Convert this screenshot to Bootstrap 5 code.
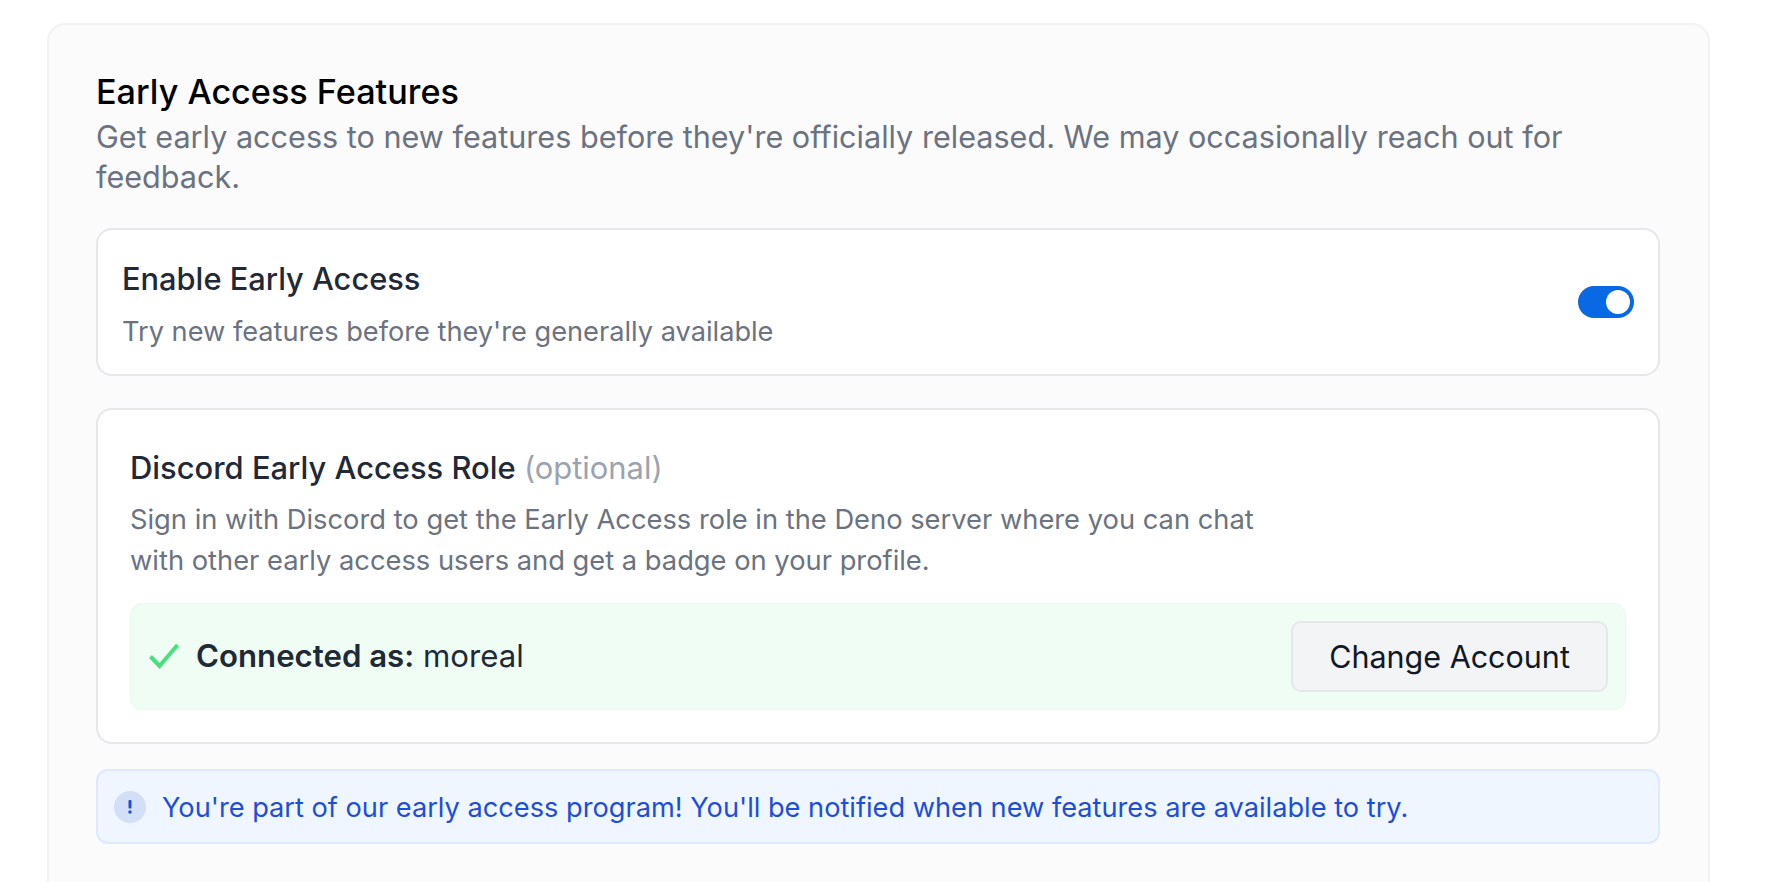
<!DOCTYPE html>
<html lang="en">
<head>
  <meta charset="UTF-8">
  <meta name="viewport" content="width=device-width, initial-scale=1.0">
  <title>Early Access Features</title>
  <link href="https://cdn.jsdelivr.net/npm/bootstrap@5.3.1/dist/css/bootstrap.min.css" rel="stylesheet">
  <style>
    html, body {
      height: 882px;
      overflow: hidden;
    }
    body {
      background-color: #fff;
      font-family: Inter, "Liberation Sans", sans-serif;
      padding: 23px 60px 0 47px;
    }
    .settings-panel {
      background: #fbfbfb;
      border: 2px solid #f1f2f3;
      border-radius: 18px;
      padding: 42px 48px 60px 47px;
    }
    .panel-title {
      color: #000;
      font-size: 34.2px;
      font-weight: 500;
      line-height: 49px;
      margin: 0 0 1px;
    }
    .panel-sub {
      color: #6b7280;
      font-size: 30.6px;
      line-height: 40px;
      margin: 0 0 31px;
    }
    .opt-box {
      background: #fff;
      border: 2px solid #e5e7eb;
      border-radius: 16px;
    }
    .opt-head {
      color: #1f2937;
      font-size: 30.9px;
      font-weight: 500;
      line-height: 40px;
      margin: 0 0 11px;
    }
    .opt-text {
      color: #6b7280;
      font-size: 27.3px;
      line-height: 41px;
      margin: 0;
    }
    .toggle-box { padding: 29px 24px 22px; margin-bottom: 32px; }
    .toggle-box .opt-text { margin-top: 12px; font-size: 27.2px; }
    .toggle-box .opt-head { margin-bottom: 0; font-size: 30.8px; }
    .role-box { padding: 38px 32px 32px; margin-bottom: 25px; }
    .opt-muted { color: #9ca3af; font-weight: 400; }
    .toggle-pill {
      width: 56px;
      height: 32px;
      background: #0969e4;
      border-radius: 16px;
      padding: 4px;
      margin-bottom: 7px;
    }
    .toggle-dot {
      width: 24px;
      height: 24px;
      background: #fff;
      border-radius: 50%;
    }
    .connected-bar {
      background: #f0fdf4;
      border: 1px solid #e6fbed;
      border-radius: 12px;
      padding: 17px 17px 17px 18px;
      margin-top: 22px;
      color: #1f2937;
      font-size: 31.2px;
    }
    .connected-bar strong { font-weight: 600; }
    .connected-label { gap: 17px; }
    .change-btn {
      background: #f3f4f6;
      border: 2px solid #e5e7eb;
      border-radius: 10px;
      color: #111827;
      font-size: 30.5px;
      height: 71px;
      width: 317px;
      padding: 0;
    }
    .change-btn:hover { background: #e5e7eb; }
    .notice-bar {
      background: #eff6ff;
      border: 2px solid #dbeafe;
      border-radius: 12px;
      color: #1d4ed8;
      font-size: 27.2px;
      height: 75px;
      padding: 0 16px;
    }
    .notice-text { padding-top: 3px; }
    .notice-dot {
      width: 32px;
      height: 32px;
      background: #d2dff7;
      border-radius: 50%;
      color: #1d4ed8;
      flex-shrink: 0;
    }
  </style>
</head>
<body>
  <div class="settings-panel">
    <h2 class="panel-title">Early Access Features</h2>
    <p class="panel-sub">Get early access to new features before they're officially released. We may occasionally reach out for feedback.</p>

    <!-- Toggle -->
    <div class="opt-box toggle-box d-flex align-items-center justify-content-between">
      <div>
        <h3 class="opt-head">Enable Early Access</h3>
        <p class="opt-text">Try new features before they're generally available</p>
      </div>
      <div class="toggle-pill d-flex justify-content-end">
        <div class="toggle-dot"></div>
      </div>
    </div>

    <!-- Discord -->
    <div class="opt-box role-box">
      <h3 class="opt-head">Discord Early Access Role <span class="opt-muted">(optional)</span></h3>
      <p class="opt-text">Sign in with Discord to get the Early Access role in the Deno server where you can chat<br>with other early access users and get a badge on your profile.</p>
      <div class="connected-bar d-flex align-items-center justify-content-between">
        <div class="connected-label d-flex align-items-center">
          <svg width="30" height="26" viewBox="0 0 30 26" fill="none" stroke="#4ade80" stroke-width="4"><path d="M1.5 13.5 L10.5 23 L28.5 2"/></svg>
          <span><strong>Connected as:</strong> moreal</span>
        </div>
        <button type="button" class="btn change-btn">Change Account</button>
      </div>
    </div>

    <!-- Notice -->
    <div class="notice-bar d-flex align-items-center gap-3">
      <span class="notice-dot d-flex align-items-center justify-content-center">
        <svg width="6" height="14" viewBox="0 0 6 14" fill="#1d4ed8"><rect x="1.5" y="0" width="3" height="8.5" rx="1"/><circle cx="3" cy="12" r="1.7"/></svg>
      </span>
      <span class="notice-text">You're part of our early access program! You'll be notified when new features are available to try.</span>
    </div>
  </div>

  <script src="https://cdn.jsdelivr.net/npm/bootstrap@5.3.1/dist/js/bootstrap.bundle.min.js"></script>
</body>
</html>
